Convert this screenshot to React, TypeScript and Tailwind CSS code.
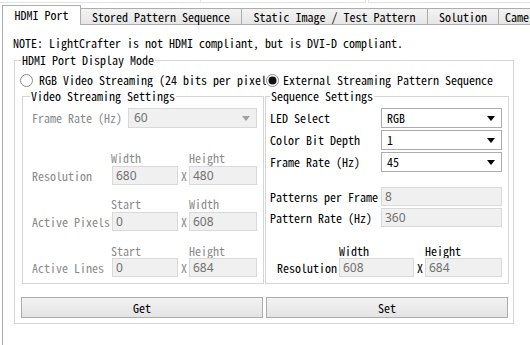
import React from "react";

const MONO = "font-['Noto_Sans_Mono_CJK_SC','Liberation_Mono',monospace] text-[12px] leading-[14px]";
const SANS = "font-['Noto_Sans','Liberation_Sans',sans-serif] text-[12px] leading-[14px]";

function Arrow({ color }: { color: string }) {
  return (
    <svg width="8" height="5" viewBox="0 0 8 5">
      <path d="M0 0 L8 0 L4 5 Z" fill={color} />
    </svg>
  );
}

function Field({ cls, value }: { cls: string; value: string }) {
  return (
    <div className={`${cls} h-[19px] border border-[#d9d9d9] bg-[#f0f0f0] flex items-center pl-[3px] text-[#707070] ${SANS}`}>
      {value}
    </div>
  );
}

function Select({ cls, value, disabled }: { cls: string; value: string; disabled?: boolean }) {
  return (
    <div
      className={`${cls} h-[20px] border flex items-center justify-between pl-[5px] pr-[6px] ${
        disabled ? "border-[#d9d9d9] bg-[#f0f0f0] text-[#707070]" : "border-[#acacac] bg-white text-black"
      } ${disabled ? SANS : MONO}`}
    >
      <span>{value}</span>
      <Arrow color={disabled ? "#a0a0a0" : "#000"} />
    </div>
  );
}

function Radio({ checked }: { checked?: boolean }) {
  return (
    <svg width="13" height="13" viewBox="0 0 13 13" className="shrink-0">
      <circle cx="6.5" cy="6.5" r="6" fill="#fff" stroke="#8c8c8c" />
      {checked && <circle cx="6.5" cy="6.5" r="4" fill="#111" />}
    </svg>
  );
}

function Group({ title, cls, titleCls, children }: { title: string; cls: string; titleCls: string; children: React.ReactNode }) {
  return (
    <div className={`relative border border-[#d5d5d5] ${cls}`}>
      <div className={`absolute top-[-8px] ${titleCls} bg-white px-[1px] text-black ${MONO}`}>{title}</div>
      {children}
    </div>
  );
}

export default function App() {
  const grey = "text-[#8a8a8a]";
  return (
    <div className={`w-[530px] h-[345px] bg-white overflow-hidden ${MONO} text-black`}>
      {/* top strip */}
      <div className="h-[5px] flex">
        <div className="w-[201px] h-[3px] border-b border-r border-[#e3e3e3]" />
        <div className="w-[165px] h-[3px] border-b border-r border-[#e3e3e3]" />
        <div className="flex-1 h-[3px] border-b border-l border-[#e3e3e3] ml-[2px]" />
      </div>
      {/* tabs */}
      <div className="flex items-end h-[20px] pl-[2px] overflow-hidden whitespace-nowrap">
        <div className="w-[79px] h-[20px] shrink-0 border-l border-t border-r border-[#acacac] bg-white flex items-center justify-center pb-[2px]">
          HDMI Port
        </div>
        <div className="w-[161px] h-[17px] shrink-0 border-t border-r border-b border-[#acacac] bg-gradient-to-b from-[#f3f3f3] to-[#e6e6e6] flex items-center justify-center">
          Stored Pattern Sequence
        </div>
        <div className="w-[186px] h-[17px] shrink-0 border-t border-r border-b border-[#acacac] bg-gradient-to-b from-[#f3f3f3] to-[#e6e6e6] flex items-center justify-center">
          Static Image / Test Pattern
        </div>
        <div className="w-[71px] h-[17px] shrink-0 border-t border-r border-b border-[#acacac] bg-gradient-to-b from-[#f3f3f3] to-[#e6e6e6] flex items-center justify-center">
          Solution
        </div>
        <div className="w-[80px] h-[17px] shrink-0 border-t border-r border-b border-[#acacac] bg-gradient-to-b from-[#f3f3f3] to-[#e6e6e6] flex items-center pl-[6px]">
          Camera
        </div>
      </div>
      {/* pane */}
      <div className="ml-[2px] h-[320px] border-l border-[#acacac] pl-[10px] pt-[11px]">
        <div className="h-[14px] whitespace-nowrap">NOTE: LightCrafter is not HDMI compliant, but is DVI-D compliant.</div>
        <Group title="HDMI Port Display Mode" cls="mt-[10px] ml-[1px] w-[500px] h-[264px]" titleCls="left-[6px]">
          <div className="mt-[11px] h-[16px] flex items-center">
            <div className="ml-[5px] w-[246px] flex items-center overflow-hidden whitespace-nowrap">
              <Radio />
              <span className="ml-[6px]">RGB Video Streaming (24 bits per pixels)</span>
            </div>
            <div className="flex items-center whitespace-nowrap">
              <Radio checked />
              <span className="ml-[4px]">External Streaming Pattern Sequence</span>
            </div>
          </div>
          <div className="mt-[8px] ml-[7px] flex gap-[1px]">
            {/* Video streaming settings */}
            <Group title="Video Streaming Settings" cls="w-[242px] h-[188px] pl-[9px]" titleCls="left-[7px]">
              <div className={`mt-[11px] h-[20px] flex items-center ${grey}`}>
                <div className="w-[96px]">Frame Rate (Hz)</div>
                <Select cls="w-[129px]" value="60" disabled />
              </div>
              <div className={`mt-[23px] h-[14px] flex ${grey}`}>
                <div className="w-[79px]" />
                <div className="w-[78px]">Width</div>
                <div>Height</div>
              </div>
              <div className={`mt-[1px] h-[19px] flex items-center ${grey}`}>
                <div className="w-[80px]">Resolution</div>
                <Field cls="w-[66px]" value="680" />
                <div className="w-[11px] pl-[3px]">X</div>
                <Field cls="w-[68px]" value="480" />
              </div>
              <div className={`mt-[12px] h-[14px] flex ${grey}`}>
                <div className="w-[79px]" />
                <div className="w-[78px]">Start</div>
                <div>Width</div>
              </div>
              <div className={`mt-[1px] h-[19px] flex items-center ${grey}`}>
                <div className="w-[80px] whitespace-nowrap">Active Pixels</div>
                <Field cls="w-[66px]" value="0" />
                <div className="w-[11px] pl-[3px]">X</div>
                <Field cls="w-[68px]" value="608" />
              </div>
              <div className={`mt-[13px] h-[14px] flex ${grey}`}>
                <div className="w-[79px]" />
                <div className="w-[78px]">Start</div>
                <div>Height</div>
              </div>
              <div className={`h-[19px] flex items-center ${grey}`}>
                <div className="w-[80px] whitespace-nowrap">Active Lines</div>
                <Field cls="w-[66px]" value="0" />
                <div className="w-[11px] pl-[3px]">X</div>
                <Field cls="w-[68px]" value="684" />
              </div>
            </Group>
            {/* Sequence settings */}
            <Group title="Sequence Settings" cls="w-[244px] h-[188px] pl-[4px]" titleCls="left-[4px]">
              <div className="mt-[11px] h-[20px] flex items-center">
                <div className="w-[111px]">LED Select</div>
                <Select cls="w-[121px]" value="RGB" />
              </div>
              <div className="mt-[2px] h-[20px] flex items-center">
                <div className="w-[111px]">Color Bit Depth</div>
                <Select cls="w-[121px]" value="1" />
              </div>
              <div className="mt-[2px] h-[20px] flex items-center">
                <div className="w-[111px]">Frame Rate (Hz)</div>
                <Select cls="w-[121px]" value="45" />
              </div>
              <div className="mt-[15px] h-[19px] flex items-center">
                <div className="w-[111px] whitespace-nowrap">Patterns per Frame</div>
                <Field cls="w-[121px]" value="8" />
              </div>
              <div className="mt-[2px] h-[19px] flex items-center">
                <div className="w-[111px] whitespace-nowrap">Pattern Rate (Hz)</div>
                <Field cls="w-[121px]" value="360" />
              </div>
              <div className="mt-[17px] h-[14px] flex">
                <div className="w-[69px]" />
                <div className="w-[86px]">Width</div>
                <div>Height</div>
              </div>
              <div className="h-[19px] flex items-center">
                <div className="w-[69px] pl-[7px] whitespace-nowrap">Resolution</div>
                <Field cls="w-[75px]" value="608" />
                <div className="w-[11px] pl-[3px]">X</div>
                <Field cls="w-[77px]" value="684" />
              </div>
            </Group>
          </div>
          <div className="mt-[13px] ml-[6px] flex gap-[3px]">
            <div className="w-[242px] h-[21px] border border-[#acacac] bg-gradient-to-b from-[#f2f2f2] to-[#e4e4e4] flex items-center justify-center">
              Get
            </div>
            <div className="w-[242px] h-[21px] border border-[#acacac] bg-gradient-to-b from-[#f2f2f2] to-[#e4e4e4] flex items-center justify-center">
              Set
            </div>
          </div>
        </Group>
      </div>
    </div>
  );
}
